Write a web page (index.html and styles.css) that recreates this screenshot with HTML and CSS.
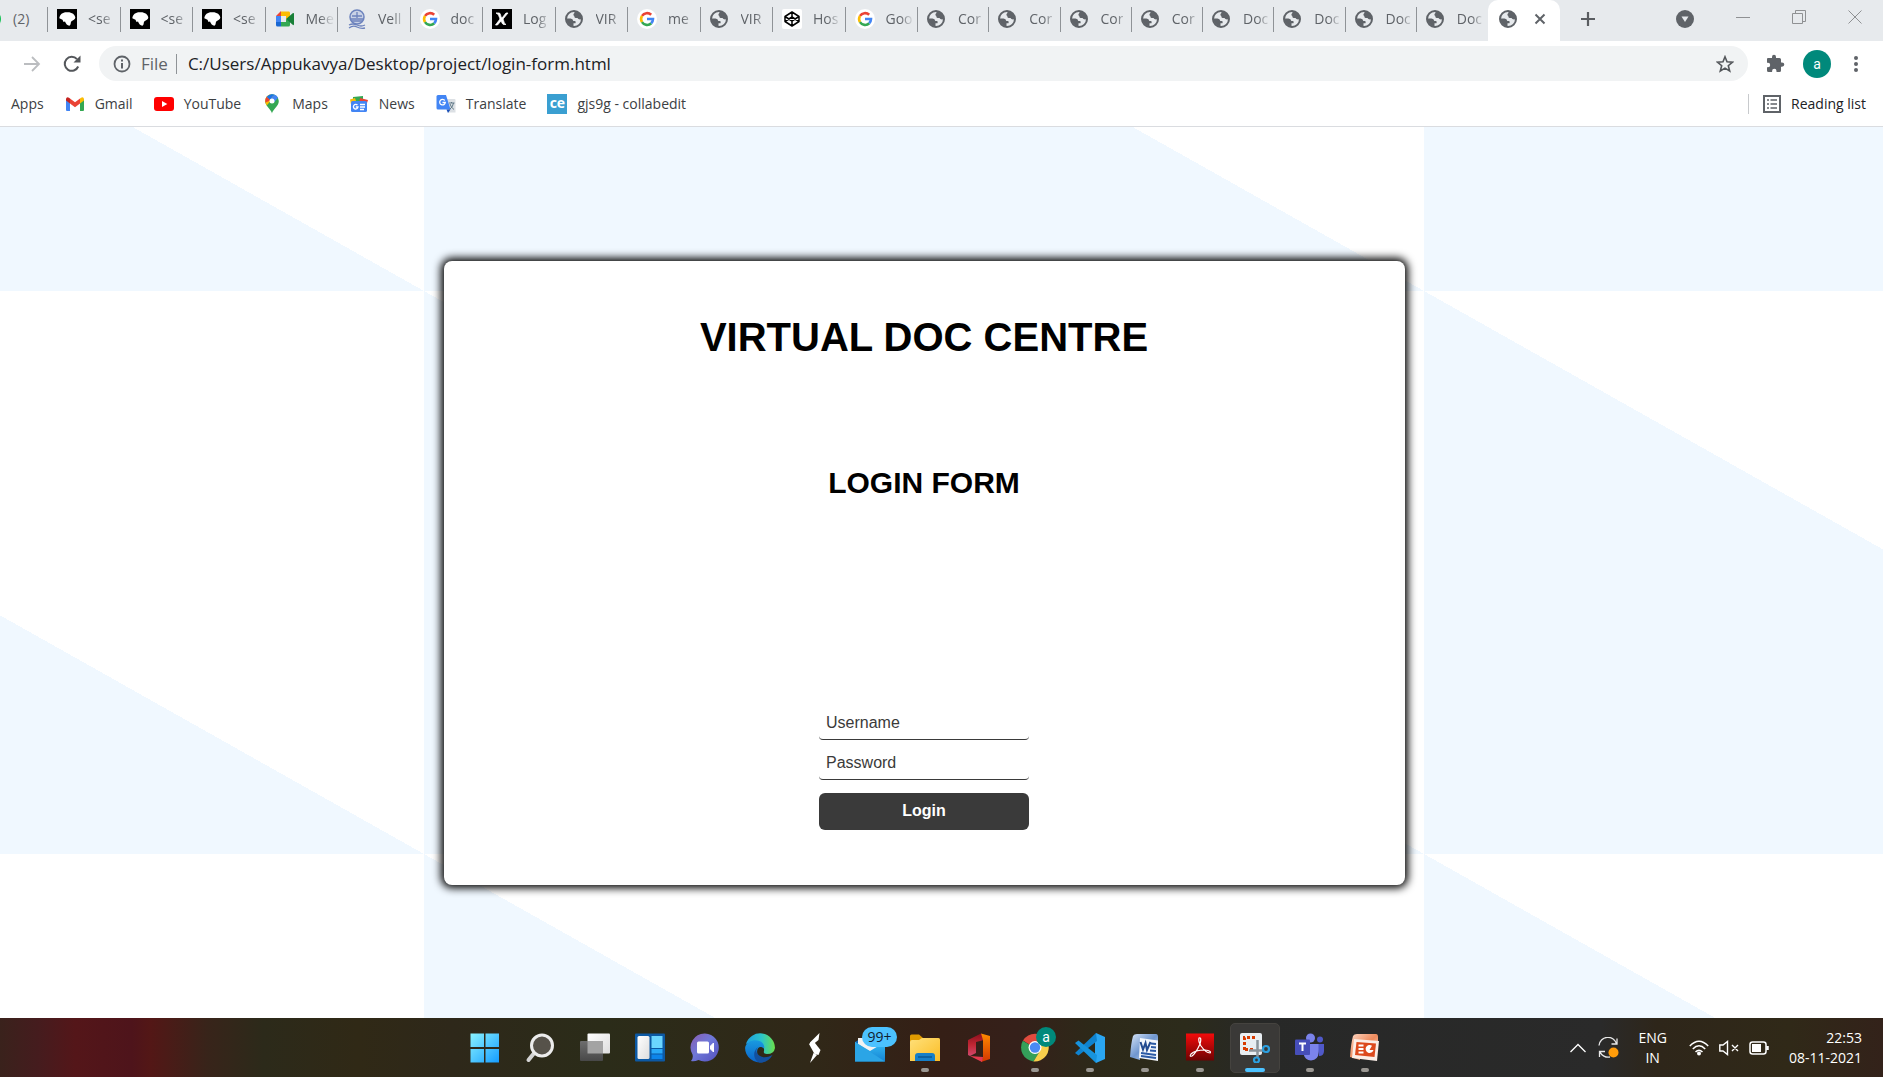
FILE: index.html
```html
<!DOCTYPE html>
<html lang="en">
<head>
<meta charset="utf-8">
<title>Login Form</title>
<link rel="stylesheet" href="styles.css">
</head>
<body>
<svg class="defs" aria-hidden="true">
  <defs>
    <linearGradient id="g-win" x1="0" y1="0" x2="1" y2="1"><stop offset="0" stop-color="#8af3ff"/><stop offset="1" stop-color="#159cff"/></linearGradient>
    <linearGradient id="g-white" x1="0" y1="0" x2="1" y2="1"><stop offset="0" stop-color="#fff"/><stop offset="1" stop-color="#ddd"/></linearGradient>
    <linearGradient id="g-grey" x1="0" y1="0" x2="0" y2="1"><stop offset="0" stop-color="#6e6e6e"/><stop offset="1" stop-color="#484848"/></linearGradient>
    <linearGradient id="g-chat" x1="0" y1="0" x2="1" y2="1"><stop offset="0" stop-color="#8a5cb0"/><stop offset=".45" stop-color="#6f78d8"/><stop offset="1" stop-color="#5350be"/></linearGradient>
    <linearGradient id="g-edge" x1="0" y1="0" x2="1" y2="0"><stop offset="0" stop-color="#1d9fe0"/><stop offset=".55" stop-color="#2cc5c8"/><stop offset="1" stop-color="#6be04a"/></linearGradient>
    <linearGradient id="g-edge2" x1="0" y1="0" x2="0" y2="1"><stop offset="0" stop-color="#199ae0"/><stop offset="1" stop-color="#0b63c9"/></linearGradient>
    <linearGradient id="g-mail" x1="0" y1="0" x2="0" y2="1"><stop offset="0" stop-color="#36bdf5"/><stop offset="1" stop-color="#1583d3"/></linearGradient>
    <linearGradient id="g-folder" x1="0" y1="0" x2="1" y2="1"><stop offset="0" stop-color="#ffe07a"/><stop offset="1" stop-color="#fbbd25"/></linearGradient>
    <linearGradient id="g-office" x1="0" y1="0" x2="0" y2="1"><stop offset="0" stop-color="#8d0f1d"/><stop offset=".5" stop-color="#c02733"/><stop offset="1" stop-color="#d0486d"/></linearGradient>
    <linearGradient id="g-office2" x1="0" y1="0" x2="0" y2="1"><stop offset="0" stop-color="#ff8a00"/><stop offset="1" stop-color="#d23600"/></linearGradient>
    <linearGradient id="g-pdf" x1="0" y1="0" x2="0" y2="1"><stop offset="0" stop-color="#f40b0b"/><stop offset="1" stop-color="#6e0202"/></linearGradient>
    <linearGradient id="g-word" x1="0" y1="0" x2="1" y2="1"><stop offset="0" stop-color="#d8e6f8"/><stop offset=".5" stop-color="#6f96cf"/><stop offset="1" stop-color="#dfe9f6"/></linearGradient>
    <linearGradient id="g-ppt" x1="0" y1="0" x2="1" y2="1"><stop offset="0" stop-color="#fdd9c6"/><stop offset=".5" stop-color="#ee8a5c"/><stop offset="1" stop-color="#fbe3d6"/></linearGradient>
    <symbol id="globe" viewBox="0 0 18 18"><circle cx="9" cy="9" r="8" fill="#e7eaed" stroke="#5f6368" stroke-width="2"/><path d="M9.500 1Q15 1.500 17 8Q16.500 9.500 15 9.500Q13 9.300 12.500 8H10.500Q9 7.500 9.300 6Q8 5.500 8.500 4Q9.800 3.800 9.500 1ZM1 8.500H5.500Q8 8.600 8.300 11H10Q11.200 11.500 10.500 13.200H8.500V16.500Q2 15.500 1 8.500Z" fill="#5f6368"/></symbol>
    <symbol id="google" viewBox="0 0 20 20"><circle cx="10" cy="10" r="10" fill="#fff"/><path d="M5 6.900A6 6 0 0 1 14.200 5.800" fill="none" stroke="#ea4335" stroke-width="2.600"/><path d="M5 13.100A6 6 0 0 1 5 6.900" fill="none" stroke="#fbbc05" stroke-width="2.600"/><path d="M14.300 14.200A6 6 0 0 1 5 13.100" fill="none" stroke="#34a853" stroke-width="2.600"/><path d="M10 10H16A6 6 0 0 1 14.200 14.200" fill="none" stroke="#4285f4" stroke-width="2.600"/></symbol>
    <symbol id="splash" viewBox="0 0 20 20"><path d="M0 0H20V20H0Z"/><path d="M2.300 9.200C2.800 5 6 2.800 10.500 3.200C14.500 3 18.400 5.500 18.300 8.800C18.300 10.500 16 11.300 14.500 12.200C13.400 13 14.200 15.500 12.800 16.600C10.800 17 8.800 15 8 12.500L6.500 13L5.500 10.800Z" fill="#fff"/></symbol>
  </defs>
</svg>

<header class="browser">
  <div class="tabstrip">
    <div class="tabs tabs-a" role="tablist" aria-label="Open tabs">
      <button class="tab tab-first"><svg class="fav" viewBox="0 0 20 20"><circle cx="10" cy="10" r="9" fill="#11c152"/></svg><span>(2)</span></button>
      <button class="tab"><svg class="fav"><use href="#splash"/></svg><span>&lt;se</span></button>
      <button class="tab"><svg class="fav"><use href="#splash"/></svg><span>&lt;se</span></button>
      <button class="tab"><svg class="fav"><use href="#splash"/></svg><span>&lt;se</span></button>
      <button class="tab"><svg class="fav" viewBox="0 0 20 20"><path d="M1 7L6 2V7Z" fill="#ea4335"/><path d="M6 2.500H14Q15 2.500 15 4V9L11 10V7H6Z" fill="#fbbc04"/><path d="M1 7H6V13H1Z" fill="#4285f4"/><path d="M1 13H6V17.500H2.500Q1 17.500 1 16Z" fill="#1967d2"/><path d="M6 13H11V10L15 12V16Q15 17.500 13.500 17.500H6Z" fill="#34a853"/><path d="M11 10L18 4Q19 3.500 19 5V15Q19 16.500 18 16L11 10Z" fill="#188038"/></svg><span>Mee</span></button>
      <button class="tab"><svg class="fav" viewBox="0 0 20 20" fill="none" stroke="#6d83bd"><circle cx="10" cy="8" r="7" stroke-width="1.500" fill="#c9d2e6"/><path d="M4 10H16M5 7H15M10 3V9M5 12H15" stroke-width="1.300"/><path d="M2 16Q6 14 10 16T18 16M2 19Q6 16 10 18T18 19" stroke-width="1.300"/></svg><span>Vell</span></button>
      <button class="tab"><svg class="fav"><use href="#google"/></svg><span>doc</span></button>
      <button class="tab"><svg class="fav" viewBox="0 0 20 20"><path d="M0 0H20V20H0Z"/><path d="M4 4H7C9 4 8 7 10 9L14 4H16L11 10C12 12 12 15 14 15.500H12C10 15.500 10 13 9 12L5.500 16H3.500L8 10C7 8 7 5 4 4Z" fill="#fff" stroke="#fff" stroke-width=".8"/></svg><span>Log</span></button>
      <button class="tab"><svg class="fav fav-s"><use href="#globe"/></svg><span>VIR</span></button>
      <button class="tab"><svg class="fav"><use href="#google"/></svg><span>me</span></button>
      <button class="tab"><svg class="fav fav-s"><use href="#globe"/></svg><span>VIR</span></button>
      <button class="tab"><svg class="fav" viewBox="0 0 20 20"><rect width="20" height="20" rx="2" fill="#fff"/><path d="M10 3L17 7.500V12.500L10 17L3 12.500V7.500ZM3 7.500L10 12L17 7.500M3 12.500L10 8L17 12.500M10 3V8M10 12V17" fill="none" stroke="#000" stroke-width="1.500" stroke-linejoin="round"/></svg><span>Hos</span></button>
      <button class="tab"><svg class="fav"><use href="#google"/></svg><span>Goo</span></button>
    </div>
    <div class="tabs tabs-b" role="tablist" aria-label="More tabs">
      <button class="tab"><svg class="fav fav-s"><use href="#globe"/></svg><span>Cor</span></button>
      <button class="tab"><svg class="fav fav-s"><use href="#globe"/></svg><span>Cor</span></button>
      <button class="tab"><svg class="fav fav-s"><use href="#globe"/></svg><span>Cor</span></button>
      <button class="tab"><svg class="fav fav-s"><use href="#globe"/></svg><span>Cor</span></button>
      <button class="tab"><svg class="fav fav-s"><use href="#globe"/></svg><span>Doc</span></button>
      <button class="tab"><svg class="fav fav-s"><use href="#globe"/></svg><span>Doc</span></button>
      <button class="tab"><svg class="fav fav-s"><use href="#globe"/></svg><span>Doc</span></button>
      <button class="tab tab-last"><svg class="fav fav-s"><use href="#globe"/></svg><span>Doc</span></button>
    </div>
    <div class="tab-active">
      <svg class="fav fav-s"><use href="#globe"/></svg>
      <button class="icon-btn" aria-label="Close tab"><svg width="12" height="12" viewBox="0 0 12 12"><path d="M1.500 1.500L10.500 10.500M10.500 1.500L1.500 10.500" stroke="#5f6368" stroke-width="2"/></svg></button>
    </div>
    <button class="icon-btn new-tab" aria-label="New tab"><svg width="16" height="16" viewBox="0 0 16 16"><path d="M8 1V15M1 8H15" stroke="#5a5d61" stroke-width="2.200"/></svg></button>
    <div class="window-controls">
      <button class="icon-btn tab-search" aria-label="Search tabs"><svg width="18" height="18" viewBox="0 0 18 18"><circle cx="9" cy="9" r="9" fill="#5f6368"/><path d="M5.500 6.500H12.500L9 12Z" fill="#e7eaed"/></svg></button>
      <button class="icon-btn" aria-label="Minimize"><svg width="14" height="14" viewBox="0 0 14 14"><path d="M0 7.500H14" stroke="#8f9193"/></svg></button>
      <button class="icon-btn" aria-label="Restore"><svg width="14" height="14" viewBox="0 0 14 14"><path d="M.5 3.500H10.500V13.500H.5ZM3.500 3V.5H13.500V11.500H11" fill="none" stroke="#8f9193"/></svg></button>
      <button class="icon-btn" aria-label="Close"><svg width="14" height="14" viewBox="0 0 14 14"><path d="M.5 .5L13.500 13.500M13.500 .5L.5 13.500" stroke="#8f9193"/></svg></button>
    </div>
  </div>

  <div class="toolbar">
    <button class="icon-btn" aria-label="Forward"><svg width="18" height="18" viewBox="0 0 18 18"><path d="M1 9H16M9 2L16 9L9 16" fill="none" stroke="#bbbdc0" stroke-width="1.800"/></svg></button>
    <button class="icon-btn reload" aria-label="Reload"><svg width="18" height="18" viewBox="0 0 18 18"><path d="M15.200 11.500A7 7 0 1 1 14 4.200" fill="none" stroke="#54575b" stroke-width="2"/><path d="M17.500 .5V7.500H10.500Z" fill="#54575b"/></svg></button>
    <div class="omnibox">
      <svg width="18" height="18" viewBox="0 0 18 18"><circle cx="9" cy="9" r="7.500" fill="none" stroke="#5f6368" stroke-width="1.800"/><path d="M8 4.500H10V6.400H8ZM8 8H10V13.500H8Z" fill="#5f6368"/></svg>
      <span class="scheme">File</span>
      <input class="url" type="text" aria-label="Address" value="C:/Users/Appukavya/Desktop/project/login-form.html">
      <button class="icon-btn" aria-label="Bookmark this page"><svg width="18" height="18" viewBox="0 0 18 18"><path d="M9 1.800L11 6.800L16.500 7.200L12.300 10.700L13.700 16L9 13.100L4.300 16L5.700 10.700L1.500 7.200L7 6.800Z" fill="none" stroke="#54575b" stroke-width="1.600"/></svg></button>
    </div>
    <div class="actions">
      <button class="icon-btn" aria-label="Extensions"><svg width="19" height="19" viewBox="0 0 19 19"><path d="M1 5Q1 4 2 4H6V3Q6 .8 8 .8T10 3V4H13.500Q15 4 15 5.500V8.500H16Q18.300 8.500 18.300 10.600T16 12.700H15V16.500Q15 18 13.500 18H10.500V17Q10.500 14.800 8.300 14.800T6.100 17V18H2.500Q1 18 1 16.500V13.200H2Q4.200 13.200 4.200 11T2 8.800H1Z" fill="#5f6368"/></svg></button>
      <button class="avatar" aria-label="Profile">a</button>
      <button class="icon-btn" aria-label="Menu"><svg width="6" height="18" viewBox="0 0 6 18" fill="#5f6368"><circle cx="3" cy="3" r="2"/><circle cx="3" cy="9" r="2"/><circle cx="3" cy="15" r="2"/></svg></button>
    </div>
  </div>

  <nav class="bookmarks" aria-label="Bookmarks">
    <a href="#" class="bm">Apps</a>
    <a href="#" class="bm"><svg width="20" height="20" viewBox="0 0 20 20"><path d="M1 5V16Q1 17 2 17H5V8Z" fill="#4285f4"/><path d="M19 5V16Q19 17 18 17H15V8Z" fill="#34a853"/><path d="M15 4.500V9.500L19 6.500V5Q18.500 2.500 16 3.700Z" fill="#fbbc04"/><path d="M5 4.500L10 8.300L15 4.500V9.500L10 13.300L5 9.500Z" fill="#ea4335"/><path d="M1 5Q1.500 2.500 4 3.700L5 4.500V9.500L1 6.500Z" fill="#c5221f"/></svg>Gmail</a>
    <a href="#" class="bm"><svg width="20" height="20" viewBox="0 0 20 20"><rect y="3" width="20" height="14" rx="3" fill="#f00"/><path d="M8 7L13.300 10L8 13Z" fill="#fff"/></svg>YouTube</a>
    <a href="#" class="bm"><svg width="20" height="20" viewBox="0 0 20 20"><path d="M10 19.500C9.500 15.500 3.200 12.500 3.200 7A6.800 6.800 0 0 1 16.800 7C16.800 12.500 10.500 15.500 10 19.500Z" fill="#34a853"/><path d="M4.700 11.500L12.500 2.500L8 .6A6.800 6.800 0 0 0 3.200 7Q3.200 9.500 4.700 11.500Z" fill="#fbbc04"/><path d="M4.700 2.700L9 6.300L3.300 8.500Q2.700 5 4.700 2.700Z" fill="#ea4335"/><path d="M4.700 2.700A6.800 6.800 0 0 1 12.200 .6L8 6Z" fill="#1a73e8"/><path d="M12.200 .6Q15 1.500 16 3.800L11.500 9L8 6Z" fill="#4285f4"/><circle cx="10" cy="7" r="2.500" fill="#fff"/></svg>Maps</a>
    <a href="#" class="bm"><svg width="20" height="20" viewBox="0 0 20 20"><path d="M4 3L14 2V8H4Z" fill="#34a853"/><path d="M1 5.500L6 4L8 10L2.500 13Z" fill="#fbbc04"/><path d="M11 4L19 6L17 12L10 9Z" fill="#ea4335"/><rect x="2" y="7" width="16" height="11" rx="1.500" fill="#4285f4"/><path d="M8.500 11.200A2.300 2.300 0 1 0 9 13H6.800" fill="none" stroke="#fff" stroke-width="1.300"/><path d="M11 10.500H16M11 13H16M11 15.500H15" stroke="#fff" stroke-width="1.300"/></svg>News</a>
    <a href="#" class="bm"><svg width="20" height="20" viewBox="0 0 20 20"><path d="M9 5H18.500Q19.500 5 19.500 6V18.500H12Z" fill="#dce0e4"/><path d="M2 1H10L14.500 15.500H2Q.5 15.500 .5 14V2.500Q.5 1 2 1Z" fill="#4285f4"/><path d="M10.500 15.500H14.500L12 19Z" fill="#1a4fb8"/><path d="M8.800 6.500A2.800 2.800 0 1 0 9.300 8.500H6.500" fill="none" stroke="#fff" stroke-width="1.300"/><path d="M13 9H18.500M15.500 8V9M17.500 9Q17 13 13.500 15.500M14 10Q15 13.500 18 15.500" fill="none" stroke="#607988"/></svg>Translate</a>
    <a href="#" class="bm"><span class="ce" aria-hidden="true">ce</span>gjs9g - collabedit</a>
    <a href="#" class="bm reading"><svg width="18" height="18" viewBox="0 0 18 18"><path d="M1 1H17V17H1Z" fill="none" stroke="#5f6368" stroke-width="2"/><path d="M4 5H6M4 9H6M4 13H6M7.500 5H14M7.500 9H14M7.500 13H14" stroke="#5f6368" stroke-width="1.600"/></svg>Reading list</a>
  </nav>
</header>

<main class="page">
  <section class="card">
    <h1>VIRTUAL DOC CENTRE</h1>
    <h2>LOGIN FORM</h2>
    <form class="login" onsubmit="return false">
      <input type="text" name="username" placeholder="Username" aria-label="Username">
      <input type="password" name="password" placeholder="Password" aria-label="Password">
      <button type="submit">Login</button>
    </form>
  </section>
</main>

<footer class="taskbar">
  <div class="apps">
    <button class="app" aria-label="Start"><svg viewBox="0 0 30 30"><path d="M.5 .5H14V14H.5ZM15.500 .5H29V14H15.500ZM.5 16H14V29.500H.5ZM15.500 16H29V29.500H15.500Z" fill="url(#g-win)"/></svg></button>
    <button class="app" aria-label="Search"><svg viewBox="0 0 30 30"><path d="M10 19L3.500 27" stroke="#d4d4d4" stroke-width="4" stroke-linecap="round"/><circle cx="17" cy="12.500" r="10.500" fill="#56524a" stroke="#ececec" stroke-width="3"/></svg></button>
    <button class="app" aria-label="Task view"><svg viewBox="0 0 30 30"><rect x="7.500" y=".5" width="22.500" height="20" rx="1" fill="url(#g-white)"/><rect y="8" width="23" height="20" rx="1" fill="url(#g-grey)"/><path d="M7.500 8H23V20.500H7.500Z" fill="#a3a3a3"/></svg></button>
    <button class="app" aria-label="Widgets"><svg viewBox="0 0 30 30"><rect y=".5" width="30" height="28" rx="1" fill="#0c59a4"/><rect x="2.500" y="3" width="12" height="23" rx="1.500" fill="url(#g-white)"/><path d="M16.500 3H27.500V15H16.500Z" fill="#6bd6ff"/><path d="M16.500 16H27.500V20.500H16.500Z" fill="#29a9f8"/><path d="M16.500 21.500H27.500V26H16.500Z" fill="#0d84ea"/></svg></button>
    <button class="app" aria-label="Chat"><svg viewBox="0 0 30 30"><path d="M15 .5A14 14 0 1 1 8.500 27Q4 29 1 28Q3.500 25 2.500 21.500A14 14 0 0 1 15 .5Z" fill="url(#g-chat)"/><rect x="7" y="8.500" width="12" height="12" rx="1.500" fill="#fff"/><path d="M20.500 13L23.500 10V19L20.500 16Z" fill="#fff" stroke="#fff"/></svg></button>
    <button class="app" aria-label="Edge"><svg viewBox="0 0 30 30"><path d="M1 11A14.800 14.800 0 0 1 30 15Q29 21 22 21Q18 21 19 18C20 12 13 6 1 11Z" fill="url(#g-edge)"/><path d="M.2 14C3 6 14 6 17.500 10Q20 13 19 15.500C13 10 8 20 17 28Q11 31 5.500 26Q-.5 21 .2 14Z" fill="url(#g-edge2)"/><path d="M12.800 14Q9 19 15 23Q20 26 27.500 22Q23 30 14 29.800Q8 26 9.500 19Q10.500 16 12.800 14Z" fill="#13509e"/></svg></button>
    <button class="app" aria-label="Shortcut app"><svg viewBox="0 0 30 30" fill="#fff"><path d="M19.500 0L18.500 7L11 13L10 9.500Z"/><path d="M9 11L13 7.500L20.500 17L18.500 22L14.500 21Z"/><path d="M13.500 20L17 22L10 30Z"/></svg></button>
    <button class="app" aria-label="Mail"><svg viewBox="0 0 30 30"><path d="M0 9L15 0L30 9V20H0Z" fill="#1266b4"/><path d="M3 5H27V18H3Z" fill="#f2f2f2"/><path d="M0 9L15 18L30 9V28.500H0Z" fill="url(#g-mail)"/><path d="M0 9L30 28.500H0Z" fill="#2ba5e6"/></svg><span class="count">99+</span></button>
    <button class="app running" aria-label="File Explorer"><svg viewBox="0 0 30 30"><path d="M0 3Q0 1.500 1.500 1.500H9L13 5H28Q30 5 30 7V12H0Z" fill="#e19b00"/><path d="M0 9Q0 7 2 7H9L12 5H28Q30 5 30 7V28H0Z" fill="url(#g-folder)"/><path d="M5 28V23Q5 20 8 20H22Q25 20 25 23V28Z" fill="#167fc8"/><path d="M8 24H22" stroke="#0a5795" stroke-width="1.500"/></svg></button>
    <button class="app" aria-label="Office"><svg viewBox="0 0 30 30"><path d="M3 7L16 0.500L19 7L11 9V20L5 23L3 22Z" fill="url(#g-office)"/><path d="M16 .5L25 3V26L16 29L18 24V7Z" fill="url(#g-office2)"/><path d="M5 23L18 24L17 29Z" fill="#e33a50"/></svg></button>
    <button class="app running" aria-label="Chrome"><svg viewBox="0 0 30 30"><path d="M15 15L3 7.500A14 14 0 0 1 27.200 8L28 9H15Z" fill="#df4b3e"/><path d="M15 15L2.800 7.800A14 14 0 0 0 13.500 28.500L20 18Z" fill="#34a05a"/><path d="M15 9H27.600A14 14 0 0 1 13.500 28.500L20.500 17Z" fill="#f8cf4c"/><circle cx="15" cy="14.500" r="6.500" fill="#fff"/><circle cx="15" cy="14.500" r="5.200" fill="#4a8af4"/></svg><span class="profile">a</span></button>
    <button class="app running" aria-label="Visual Studio Code"><svg viewBox="0 0 30 30"><path d="M21 0L30 4V26L21 30L20 22V8Z" fill="#2aa6f2"/><path d="M21 0L22 8L3.500 22.500L0 20Z" fill="#0f83cf"/><path d="M0 10L3.500 7.500L22 22L21 30Z" fill="#1793dd"/></svg></button>
    <button class="app running" aria-label="Word"><svg viewBox="0 0 30 30"><path d="M0 24Q1 10 3 3Q4 1 7 1H26Q28 1 28 4V10L10 8V27Z" fill="url(#g-word)"/><path d="M10 5L28 7.500V28L9 25Z" fill="#f3f7fc"/><path d="M10.500 9L13 16.500L15.500 10L17 17L20.500 9" fill="none" stroke="#234b91" stroke-width="2"/><path d="M21 10.500L26 11M21 14L26 14.500M20 17.500L26 18M11 20L26 22M11 23L26 25" stroke="#2b5aa5" stroke-width="2"/></svg></button>
    <button class="app running" aria-label="Acrobat Reader"><svg viewBox="0 0 30 30"><rect x="1" y=".5" width="28" height="27" fill="url(#g-pdf)"/><path d="M14 5Q17 4 15 11Q11 20 7 23Q4 24 6 21Q10 17 20 17Q27 18 25 20Q21 20 16 13Q13 8 14 5Z" fill="none" stroke="#fff" stroke-width="1.200"/></svg></button>
    <button class="app running current" aria-label="Snipping Tool"><svg viewBox="0 0 30 30"><rect y="0" width="22" height="22" rx="2" fill="#e9eef2"/><path d="M4.500 17V4.500H17" fill="none" stroke="#d83b01" stroke-width="3" stroke-dasharray="3 2"/><path d="M5 16.500H15" stroke="#d83b01" stroke-width="3" stroke-dasharray="3 2"/><path d="M17.500 7V24M9 17.500H24" stroke="#8b949b" stroke-width="2.500"/><circle cx="26" cy="16" r="3" fill="none" stroke="#2b9fe0" stroke-width="2.200"/><circle cx="16.500" cy="27" r="2.500" fill="none" stroke="#2b9fe0" stroke-width="2.200"/></svg></button>
    <button class="app running" aria-label="Teams"><svg viewBox="0 0 30 30"><circle cx="15.500" cy="5" r="4.500" fill="#7b83eb"/><circle cx="25" cy="6.500" r="3" fill="#5059c9"/><path d="M22 11H29V18Q29 23 24 23Z" fill="#5059c9"/><path d="M8 11H23.500V19Q23.500 27 16 27.500Q10 27 8.500 21Z" fill="#7b83eb"/><rect y="6.500" width="15" height="15.500" rx="1" fill="#464eb8"/><path d="M4 10.500H11M7.500 10.500V18" stroke="#fff" stroke-width="2"/></svg></button>
    <button class="app running" aria-label="PowerPoint"><svg viewBox="0 0 30 30"><path d="M0 24Q1 10 3 3Q4 1 7 1H26Q28 1 28 4V10L10 8V27Z" fill="url(#g-ppt)"/><path d="M4 6L29 8L27 28L2 25Z" fill="#fbeee7"/><path d="M6.500 9L26 10.500L24.500 24L5 22Z" fill="#dd4a1d"/><path d="M8.500 12.500H13.500M8.500 16H13.500M8.500 19.500H13.500" stroke="#fff" stroke-width="2"/><path d="M22 12.800A4 4 0 1 0 23.500 17H19.500Z" fill="#fff"/></svg></button>
  </div>
  <div class="tray">
    <button class="icon-btn" aria-label="Show hidden icons"><svg width="16" height="10" viewBox="0 0 16 10"><path d="M.5 9L8 1.500L15.500 9" fill="none" stroke="#fff" stroke-width="1.300"/></svg></button>
    <button class="icon-btn sync" aria-label="Updates"><svg width="21" height="21" viewBox="0 0 21 21"><path d="M1 8.500A9 9 0 0 1 18.500 6.500M19 1.500V7H13.500M12 20A9 9 0 0 1 1.800 14.500M1.500 20V14.500H7" fill="none" stroke="#e8e8e8" stroke-width="1.300"/><circle cx="15.500" cy="15.500" r="5" fill="#ff9c0a"/></svg></button>
    <div class="lang">ENG<br>IN</div>
    <div class="status">
      <svg width="20" height="16" viewBox="0 0 20 16"><path d="M.8 6Q10 -3.500 19.200 6M3.800 9Q10 2.500 16.200 9M6.500 12Q10 8.500 13.500 12" fill="none" stroke="#fff" stroke-width="1.500"/><circle cx="10" cy="13.500" r="2" fill="#fff"/></svg>
      <svg width="20" height="16" viewBox="0 0 20 16"><path d="M.8 5H4L8.500 1.500V14.500L4 11H.8ZM13 5L19 11M19 5L13 11" fill="none" stroke="#fff" stroke-width="1.400"/></svg>
      <svg width="20" height="16" viewBox="0 0 20 16"><rect x="1" y="2" width="16" height="12" rx="2.500" fill="none" stroke="#fff" stroke-width="1.500"/><rect x="3" y="4" width="9" height="8" fill="#fff"/><path d="M18.500 6V10" stroke="#fff" stroke-width="2.500"/></svg>
    </div>
    <div class="clock">22:53<br>08-11-2021</div>
  </div>
</footer>
</body>
</html>
```

FILE: styles.css
```css
:root {
  --ui: "Open Sans", "Noto Sans", sans-serif;
  --page: "Liberation Sans", Arial, sans-serif;
  --grey: #5f6368;
}

* { box-sizing: border-box; }

body {
  margin: 0;
  min-height: 100vh;
  display: flex;
  flex-direction: column;
  font-family: var(--ui);
  overflow-x: hidden;
}

.defs { position: absolute; width: 0; height: 0; }
svg { display: block; flex: none; }
button { font-family: inherit; border: 0; background: none; padding: 0; margin: 0; }
.icon-btn { display: flex; align-items: center; justify-content: center; flex: none; }

/* tab strip */
.tabstrip {
  display: flex;
  align-items: stretch;
  height: 41px;
  background: #e7eaed;
}
.tabs { display: flex; min-width: 0; }
.tabs-a { flex: 0 1 918px; }
.tabs-b { flex: 0 1 570px; }
.tab {
  flex: 1 1 0;
  min-width: 0;
  display: flex;
  align-items: center;
  gap: 11px;
  padding: 0 4px 3px 9px;
  color: var(--grey);
  font-size: 14px;
  line-height: 20px;
  background: linear-gradient(#8f9397, #8f9397) right 7px / 1px 25px no-repeat;
}
.tab-first { flex: 0 0 48px; padding-left: 0; }
.tab-first .fav { margin-left: -18px; }
.tab-last { background: none; }
.tab span {
  white-space: nowrap;
  text-align: left;
  mask-image: linear-gradient(90deg, #000 14px, rgb(0 0 0 / .2) 25px);
}
.tab-first span { mask-image: none; }
.fav { width: 20px; height: 20px; }
.fav-s { width: 18px; height: 18px; margin-right: 2px; }
.tab-active {
  flex: 0 0 72px;
  display: flex;
  align-items: center;
  justify-content: space-between;
  padding: 0 14px 3px 11px;
  background: #fff;
  border-radius: 10px 10px 0 0;
}
.new-tab { padding: 0 20px 3px; }
.window-controls {
  display: flex;
  align-items: center;
  gap: 42px;
  margin-left: auto;
  padding: 0 21px 8px 0;
}
.tab-search { padding-top: 5px; }

/* toolbar */
.toolbar {
  display: flex;
  align-items: center;
  height: 45px;
  padding: 0 24px 0 23px;
}
.reload { margin: 0 18px 0 22px; }
.omnibox {
  flex: 1;
  display: flex;
  align-items: center;
  height: 35px;
  padding: 0 14px;
  border-radius: 18px;
  background: #f1f3f4;
  font-size: 17px;
}
.scheme {
  margin: 0 11px 0 10px;
  padding-right: 8px;
  line-height: 20px;
  color: var(--grey);
  border-right: 1px solid #8f9397;
}
.url {
  flex: 1;
  min-width: 0;
  border: 0;
  padding: 0;
  background: none;
  color: #202124;
  font: inherit;
  outline: 0;
}
.actions { display: flex; align-items: center; gap: 18px; padding-left: 18px; }
.avatar {
  width: 28px;
  height: 28px;
  border-radius: 50%;
  background: #00897b;
  color: #fff;
  font: 14px/28px Roboto, sans-serif;
}
.actions .icon-btn:last-child { margin-left: 4px; }

/* bookmarks */
.bookmarks {
  display: flex;
  align-items: center;
  gap: 21px;
  height: 41px;
  padding: 0 17px 4px 11px;
  border-bottom: 1px solid #dadce0;
}
.bm {
  display: flex;
  align-items: center;
  gap: 10px;
  color: #3c4043;
  font-size: 14px;
  line-height: 20px;
  text-decoration: none;
  white-space: nowrap;
}
.ce {
  width: 20px;
  height: 20px;
  background: #3a9fd1;
  color: #fff;
  font: bold 14px/17px "Open Sans", sans-serif;
  text-align: center;
}
.reading {
  margin-left: auto;
  padding-left: 14px;
  border-left: 1px solid #c8cacd;
  color: #202124;
}

/* page */
.page {
  flex: 1;
  display: grid;
  place-items: center;
  padding: 20px 35px 20px 0;
  font-family: var(--page);
  background: linear-gradient(to top right, #f0f8ff 50%, #fff 50%) 424px 164px / 1000px 563px;
}
.card {
  width: 100%;
  max-width: 961px;
  padding: 53px 20px 55px;
  display: flex;
  flex-direction: column;
  align-items: center;
  background: #fff;
  border-radius: 8px;
  box-shadow: 0 0 9px 3px #000;
}
h1 { margin: 0 0 106px; font-size: 40px; line-height: 46px; color: #000; }
h2 { margin: 0 0 207px; font-size: 30px; line-height: 34px; color: #000; }
.login { display: flex; flex-direction: column; width: 210px; }
.login input {
  height: 33px;
  margin-bottom: 7px;
  padding: 0 7px;
  border: 0;
  border-bottom: 1px solid #3a3a3a;
  border-radius: 4px;
  background: #fff;
  font: 16px/18px var(--page);
  color: #3a3a3a;
}
.login input::placeholder { color: #3a3a3a; opacity: 1; }
.login button {
  height: 37px;
  margin-top: 6px;
  border-radius: 6px;
  background: #3a3a3a;
  color: #fff;
  font: bold 16px/18px var(--page);
}

/* taskbar */
.taskbar {
  display: grid;
  grid-template-columns: 457fr auto 491fr;
  align-items: center;
  height: 59px;
  color: #fff;
  background: linear-gradient(90deg, #3a221c 0, #451c1e 2%, #541619 4%, #4e141b 7%, #531716 8%, #38241a 11%, #2c2a1a 14%, #302916 19%, #2e281a 24%, #2b2c19 32%, #302818 43%, #351f16 50%, #35201a 54%, #2d2919 58%, #2c2b1b 63%, #272827 67%, #2a2a2a 85%, #2e261a 88%, #302918 95%, #33221a 100%);
}
.apps { grid-column: 2; display: flex; }
.app {
  position: relative;
  width: 55px;
  height: 59px;
  display: grid;
  place-items: center;
}
.app svg { width: 30px; height: 30px; }
.running::after {
  content: "";
  position: absolute;
  left: 24px;
  bottom: 5px;
  width: 8px;
  height: 4px;
  border-radius: 2px;
  background: #9a9792;
}
.current::before {
  content: "";
  position: absolute;
  inset: 5px 2px 4px 3px;
  border: 1px solid #45433f;
  border-radius: 5px;
  background: #3a3937;
}
.current svg { position: relative; }
.current::after { left: 18px; width: 20px; background: #4cc2ff; }
.count {
  position: absolute;
  left: 20px;
  top: 9px;
  width: 35px;
  border-radius: 10px;
  background: #4cc2ff;
  color: #102030;
  font-size: 14px;
  line-height: 20px;
}
.profile {
  position: absolute;
  left: 29px;
  top: 9px;
  width: 20px;
  border-radius: 50%;
  background: #00897b;
  color: #fff;
  font: 14px/20px Roboto, sans-serif;
}
.tray {
  grid-column: 3;
  display: flex;
  align-items: center;
  justify-content: flex-end;
  padding-right: 21px;
  font-size: 14px;
  line-height: 20px;
}
.sync { margin: 0 19px 0 12px; }
.lang { text-align: center; }
.status { display: flex; gap: 10px; margin: 0 20px 0 22px; }
.clock { text-align: right; }
```
